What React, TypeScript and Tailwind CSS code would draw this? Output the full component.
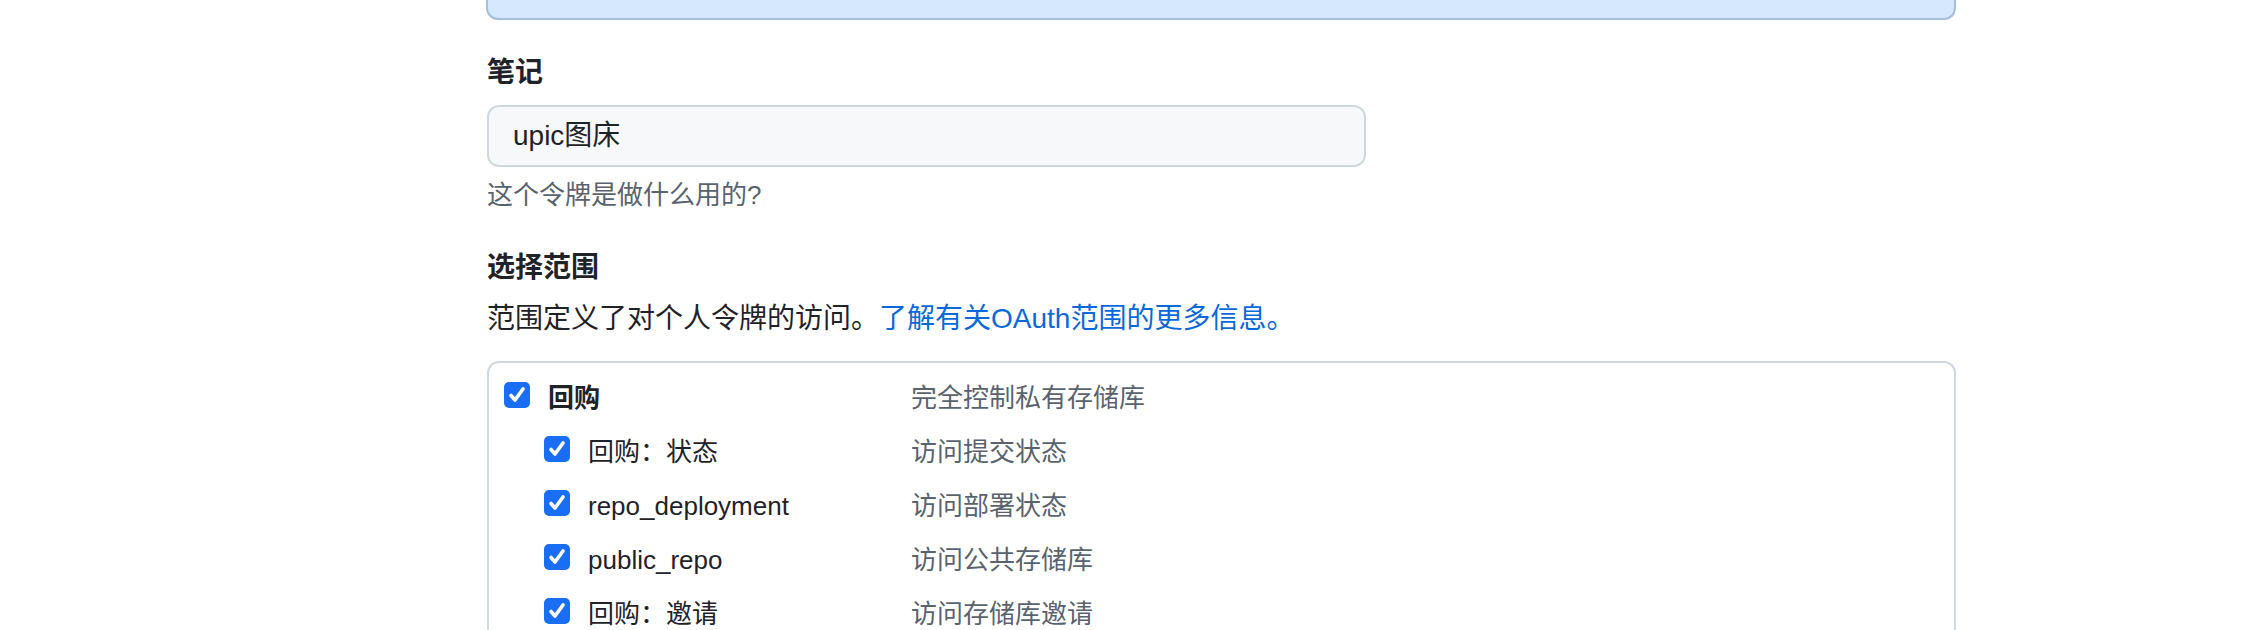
import React from "react";

const font = {
  fontFamily: '"Liberation Sans", "Noto Sans CJK SC", sans-serif',
};

type Scope = { name: string; desc: string; top?: boolean };

const scopes: Scope[] = [
  { name: "回购", desc: "完全控制私有存储库", top: true },
  { name: "回购：状态", desc: "访问提交状态" },
  { name: "repo_deployment", desc: "访问部署状态" },
  { name: "public_repo", desc: "访问公共存储库" },
  { name: "回购：邀请", desc: "访问存储库邀请" },
];

function Checkbox() {
  return (
    <span className="w-[26px] h-[26px] shrink-0 rounded-[5px] bg-[#1a6ef5] flex items-center justify-center">
      <svg width="26" height="26" viewBox="0 0 26 26" fill="none">
        <path
          d="M7 13.5l4 4.5 8-11"
          stroke="white"
          strokeWidth="3.6"
          strokeLinecap="round"
          strokeLinejoin="round"
        />
      </svg>
    </span>
  );
}

export default function App() {
  return (
    <div className="flex bg-white min-h-[630px] text-[#1f2328]" style={font}>
      {/* left gutter (sidebar area) */}
      <div className="w-[486px] shrink-0" />

      <main className="w-[1470px] shrink-0">
        {/* flash banner, cut off at the top */}
        <div className="h-[20px] bg-[#d6e8fe] border-x-2 border-b-2 border-[#a3bfe0] rounded-b-[12px]" />

        {/* Note */}
        <div className="mt-[32px] pl-[1px] text-[28px] leading-[42px] font-bold">笔记</div>
        <div className="mt-[11px] ml-[1px] w-[879px] h-[62px] bg-[#f6f8fa] border-2 border-[#d0d7de] rounded-[12px] flex items-center pl-[24px] text-[28px]">
          upic图床
        </div>
        <p className="mt-[10px] pl-[1px] text-[26px] leading-[36px] text-[#59636e]">
          这个令牌是做什么用的?
        </p>

        {/* Scopes */}
        <div className="mt-[34px] pl-[1px] text-[28px] leading-[42px] font-bold">选择范围</div>
        <p className="mt-[9px] pl-[1px] text-[28px] leading-[42px]">
          范围定义了对个人令牌的访问。
          <a className="text-[#0969da]">了解有关OAuth范围的更多信息。</a>
        </p>

        <div className="mt-[21px] ml-[1px] w-[1469px] h-[300px] border-2 border-[#d0d7de] rounded-[12px] pt-[5px] pl-[15px]">
          {scopes.map((s) => (
            <div key={s.name} className="flex items-center h-[54px] text-[26px]">
              <div className={`w-[407px] flex items-center gap-[18px] ${s.top ? "" : "pl-[40px]"}`}>
                <Checkbox />
                <span className={`pt-[7px] ${s.top ? "font-bold" : ""}`}>{s.name}</span>
              </div>
              <span className="pt-[7px] text-[#59636e]">{s.desc}</span>
            </div>
          ))}
        </div>
      </main>
    </div>
  );
}
